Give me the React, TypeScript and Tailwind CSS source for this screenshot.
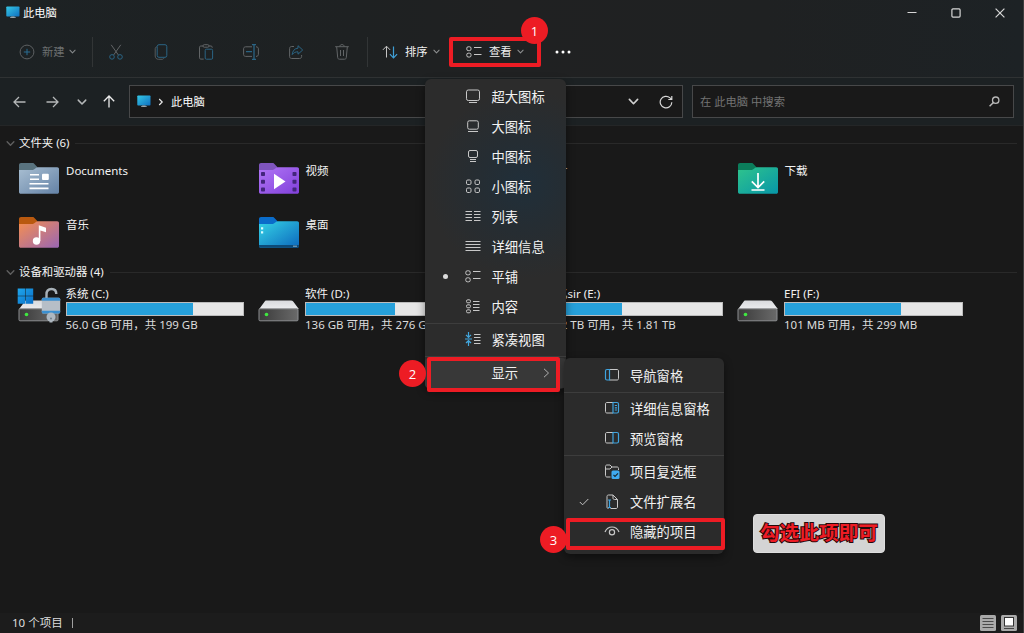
import type { ReactNode } from "react";

const CHROME = "stroke-[#c8c8c8]";

function Icon({ w = 16, h = 16, className = "", children }: { w?: number; h?: number; className?: string; children: ReactNode }) {
  return (
    <svg width={w} height={h} viewBox={`0 0 ${w} ${h}`} fill="none" strokeWidth="1" className={`shrink-0 ${className}`}>
      {children}
    </svg>
  );
}

function Monitor() {
  return (
    <Icon w={14} h={13}>
      <defs>
        <linearGradient id="mon" x1="0" y1="0" x2="1" y2="1">
          <stop offset="0" stopColor="#35c8e6" />
          <stop offset="1" stopColor="#0f6fc0" />
        </linearGradient>
      </defs>
      <rect x="0.3" y="0.5" width="13.2" height="10" rx="0.8" fill="url(#mon)" />
      <path d="M5.2 10.5h3.4v.8h1.2v.8H4v-.8h1.2z" fill="#9aa5ac" />
    </Icon>
  );
}

function Chevron({ className = "stroke-[#a0a0a0]", w = 7 }: { className?: string; w?: number }) {
  return (
    <svg width={w} height={w} viewBox="0 0 8 8" fill="none" strokeWidth="1.2" strokeLinecap="round" strokeLinejoin="round" className={`shrink-0 ${className}`}>
      <path d="M1 2.5 4 5.6 7 2.5" />
    </svg>
  );
}

function TitleBar() {
  return (
    <div className="flex h-[26px] items-center pb-px">
      <div className="flex flex-1 items-center gap-[3px] pl-1.5">
        <Monitor />
        <span className="text-[11.3px] leading-4 text-white">此电脑</span>
      </div>
      <div className="flex w-[133px] items-center stroke-[#d6d6d6]">
        <div className="flex w-[44px] justify-center">
          <Icon w={10} h={10}><path d="M0.5 4.5h9" /></Icon>
        </div>
        <div className="flex w-[44px] justify-center">
          <Icon w={10} h={10}><rect x="0.9" y="0.9" width="8.2" height="8.2" rx="1" strokeWidth="1.2" /></Icon>
        </div>
        <div className="flex w-[44px] justify-center">
          <Icon w={10} h={10}><path d="M.6.6l8.8 8.8M9.4.6.6 9.4" strokeWidth="1.2" /></Icon>
        </div>
      </div>
    </div>
  );
}

const actionIcons: ReactNode[] = [
  <Icon key="cut">
    <path d="M3.2.8 10.4 11M12.8.8 5.6 11" stroke="#626567" />
    <circle cx="4" cy="12.9" r="2.3" stroke="#2a6484" />
    <circle cx="12" cy="12.9" r="2.3" stroke="#2a6484" />
  </Icon>,
  <Icon key="copy">
    <path d="M4 2.8C2.8 3 2.2 3.7 2.2 4.8V12c0 2 1.3 3.3 3.3 3.3H9c1 0 1.7-.5 2-1.5" stroke="#565a5c" />
    <rect x="4.2" y=".7" width="9.6" height="12.6" rx="1.8" stroke="#2a6484" />
  </Icon>,
  <Icon key="paste">
    <path d="M5 2H2.7C2 2 1.5 2.5 1.5 3.2v10.6c0 .7.5 1.3 1.2 1.3h3M11 2h2c.7 0 1.2.5 1.2 1.2v.6" stroke="#626567" />
    <rect x="5" y=".7" width="6" height="2.5" rx="1.2" stroke="#626567" />
    <rect x="7.2" y="5.2" width="7.4" height="10" rx="1.2" stroke="#2a6484" />
  </Icon>,
  <Icon key="rename">
    <path d="M9 2.8H2.6C1.4 2.8.6 3.6.6 4.8v5.6c0 1.2.8 2 2 2H9M13 2.8c1.5 0 2.4.8 2.4 2v5.6c0 1.2-.9 2-2.4 2" stroke="#626567" />
    <path d="M11 .7v14.6M9 .6h4M9 15.4h4M3 7.6h6" stroke="#2a6484" strokeWidth="1.3" />
  </Icon>,
  <Icon key="share">
    <path d="M6 2.5H3.6c-1.2 0-2 .8-2 2v8c0 1.2.8 2 2 2h8c1.2 0 2-.8 2-2v-1.5" stroke="#626567" />
    <path d="M10 1.7 14.7 6 10 10.2V7.8C7.4 7.8 6 8.5 4.2 10.6 4.5 7.2 6.3 4.5 10 4.2z" stroke="#2a6484" strokeLinejoin="round" />
  </Icon>,
  <Icon key="trash">
    <path d="M1.2 2.7h13.6M5.8 2.5C5.8 1.3 6.7.6 8 .6s2.2.7 2.2 1.9M2.7 2.9l1 10.7c.1 1 .7 1.6 1.700 1.6h5.2c1 0 1.6-.6 1.700-1.6l1-10.7M6.500 6v6M9.500 6v6" stroke="#626567" />
  </Icon>,
];

function TilesIcon() {
  return (
    <Icon w={16} h={12} className={CHROME}>
      <rect x=".8" y=".8" width="4.2" height="3.8" rx="1.4" />
      <rect x=".8" y="7.2" width="4.2" height="3.8" rx="1.4" />
      <path d="M8 1.5h7.5M8 8.500h7.5" />
    </Icon>
  );
}

function Toolbar() {
  return (
    <div className="flex h-[51px] items-center text-[11.3px] leading-4">
      <div className="flex w-[92px] items-center pl-[19px]">
        <Icon>
          <circle cx="8" cy="8" r="6.9" stroke="#5d6062" />
          <path d="M8 4.8v6.4M4.8 8h6.4" stroke="#2a6d92" />
        </Icon>
        <span className="ml-[7px] text-[#6c6f70]">新建</span>
        <Chevron className="ml-[4px] stroke-[#85888a]" />
      </div>
      <div className="h-[30px] w-px bg-[#323536]" />
      <div className="flex w-[274px]">
        {actionIcons.map((icon, i) => (
          <div key={i} className="flex w-[45.2px] justify-center">{icon}</div>
        ))}
      </div>
      <div className="h-[30px] w-px bg-[#323536]" />
      <div className="flex w-[82px] items-center pl-[14px]">
        <Icon>
          <path d="M4.5 13.5V2.3M.9 5.9l3.6-3.7 3.6 3.7" stroke="#c4c4c4" />
          <path d="M11.5 2.5v11.2M7.9 10.1l3.6 3.7 3.6-3.7" stroke="#3f9fd6" strokeWidth="1.2" />
        </Icon>
        <span className="ml-[7px] text-[#f0f0f0]">排序</span>
        <Chevron className="ml-[5px] stroke-[#8d8f90]" />
      </div>
      <div className="flex w-[91px] items-center pl-[16px]">
        <TilesIcon />
        <span className="ml-[7px] text-[#f0f0f0]">查看</span>
        <Chevron className="ml-[5px] stroke-[#8d8f90]" />
      </div>
      <Icon w={16} h={4} className="ml-[14px]">
        <circle cx="2" cy="2" r="1.5" fill="#fff" />
        <circle cx="8" cy="2" r="1.5" fill="#fff" />
        <circle cx="14" cy="2" r="1.5" fill="#fff" />
      </Icon>
    </div>
  );
}

function AddressRow() {
  return (
    <div className="flex h-[47px] items-center bg-[#1c2123] pr-[9px] text-[11.3px] leading-4">
      <div className="flex w-[129px] items-center pl-[13px]">
        <Icon w={13} h={12} className="stroke-[#b4b7b8]"><path d="M12.5 6H1M6 1 1 6l5 5" strokeWidth="1.3" /></Icon>
        <Icon w={13} h={12} className="ml-[20px] stroke-[#b4b7b8]"><path d="M.5 6H12M7 1l5 5-5 5" strokeWidth="1.3" /></Icon>
        <Chevron w={10} className="ml-[18px] stroke-[#b4b7b8]" />
        <Icon w={12} h={13} className="ml-[16px] stroke-[#ececec]"><path d="M6 12.5V1M.8 6.2 6 1l5.2 5.2" strokeWidth="1.3" /></Icon>
      </div>
      <div className="flex h-[33px] w-[554px] items-center border border-[#474849] bg-[#191919] pl-[7px]">
        <Monitor />
        <Icon w={6} h={8} className="ml-[7px] stroke-[#e8e8e8]"><path d="M1.2 1 4.2 4 1.2 7" strokeWidth="1.2" /></Icon>
        <span className="ml-[7px] text-white">此电脑</span>
        <div className="flex-1" />
        <Chevron w={11} className="stroke-[#d0d0d0]" />
        <Icon w={14} h={14} className="mr-[9px] ml-[20px] stroke-[#d8d8d8]">
          <path d="M12.8 7.2A5.8 5.8 0 1 1 11 2.9l1.6 1.5M12.8 1v3.5H9.3" strokeWidth="1.2" />
        </Icon>
      </div>
      <div className="ml-[9px] flex h-[33px] flex-1 items-center justify-between border border-[#474849] bg-[#191919] pr-[13px] pl-[7px]">
        <span className="text-[#737373]">在 此电脑 中搜索</span>
        <Icon w={11} h={11} className="stroke-[#b8b8b8]">
          <circle cx="6.7" cy="4.2" r="3.2" strokeWidth="1.3" />
          <path d="M4.4 6.5.6 10.3" strokeWidth="1.5" />
        </Icon>
      </div>
    </div>
  );
}

type FolderKind = "docs" | "video" | "pictures" | "download" | "music" | "desktop";
const folderColors: Record<FolderKind, [string, string, string]> = {
  docs: ["#59737f", "#a9bfd2", "#6482a6"],
  video: ["#7f55bd", "#b176f6", "#8140da"],
  pictures: ["#2277b8", "#48c5f0", "#1676c5"],
  download: ["#0b7d5b", "#2fc48c", "#0796a8"],
  music: ["#b9590f", "#f68f50", "#9966b4"],
  desktop: ["#0a6cca", "#35d3e6", "#0c68bd"],
};

function Folder({ kind }: { kind: FolderKind }) {
  const [tab, from, to] = folderColors[kind];
  return (
    <Icon w={40} h={31}>
      <defs>
        <linearGradient id={`f-${kind}`} x1="0" y1="0" x2="1" y2="1">
          <stop offset="0" stopColor={from} />
          <stop offset="1" stopColor={to} />
        </linearGradient>
      </defs>
      <path d="M0 9V2C0 .8.8 0 2 0h11.5c1 0 1.5.4 2.2 1.2L18.5 4.3V9z" fill={tab} />
      <path d="M0 7h12.5c1.5 0 2.5-.3 3.5-1.2l1.2-1c.5-.4 1-.6 1.8-.6h19.2c1.1 0 1.8.7 1.8 1.8v23c0 1.1-.7 1.8-1.8 1.8H1.8C.7 30.8 0 30.1 0 29z" fill={`url(#f-${kind})`} />
      {kind === "docs" && (
        <>
          <path d="M11 11.7h9M11 16.2h9M10.5 20.7h19M10.5 25.4h19" stroke="#fff" strokeWidth="1.6" />
          <rect x="23" y="10.7" width="6.8" height="6.3" rx="1" fill="#fff" />
        </>
      )}
      {kind === "video" && (
        <>
          <path d="M15 10.8v15.4L26.5 18.5z" fill="#fff" />
          {[9, 16.8, 24.6].map((y) => (
            <g key={y} fill="#43257c">
              <rect x="2" y={y} width="4" height="4" rx=".8" />
              <rect x="33.5" y={y} width="4" height="4" rx=".8" />
            </g>
          ))}
        </>
      )}
      {kind === "download" && <path d="M20 10v14M13.8 18.3 20 24.5l6.2-6.2M13.5 27h13" stroke="#fff" strokeWidth="1.7" />}
      {kind === "music" && (
        <>
          <circle cx="17.5" cy="24" r="3.7" fill="#fff" />
          <path d="M19.8 24V8.3l7.2 2.5v4.5l-5.6-1.8V24z" fill="#fff" />
        </>
      )}
      {kind === "desktop" && (
        <>
          <path d="M0 28h40v1c0 1.1-.7 1.8-1.8 1.8H1.8C.7 30.8 0 30.1 0 29z" fill="#0c4a78" />
          <path d="M2 10.2h2.2v2.2H2zM2 14.2h2.2v2.2H2z" fill="#d8fbff" />
          <path d="M34.5 28.5h1V30h-1zM36.5 28.5h1V30h-1z" fill="#b8d6ea" />
        </>
      )}
      {kind === "pictures" && <path d="M7 26l9-11 6 7 4-4 7 8z" fill="#fff" />}
    </Icon>
  );
}

const folders: { kind: FolderKind; name: string }[] = [
  { kind: "docs", name: "Documents" },
  { kind: "video", name: "视频" },
  { kind: "pictures", name: "图片" },
  { kind: "download", name: "下载" },
  { kind: "music", name: "音乐" },
  { kind: "desktop", name: "桌面" },
];

function DriveIcon({ system }: { system: boolean }) {
  return (
    <Icon w={44} h={38}>
      <defs>
        <linearGradient id="dtop" x1="0" y1="0" x2="0" y2="1"><stop offset="0" stopColor="#d9dadd" /><stop offset="1" stopColor="#ebecee" /></linearGradient>
        <linearGradient id="dbody" x1="0" y1="0" x2="1" y2="0"><stop offset="0" stopColor="#3a3a3a" /><stop offset="1" stopColor="#6a6a6a" /></linearGradient>
        <linearGradient id="win" x1="0" y1="0" x2="1" y2="1"><stop offset="0" stopColor="#1fa6ec" /><stop offset="1" stopColor="#0a70c8" /></linearGradient>
      </defs>
      <path d="M9 13.5h25c1 0 1.7.3 2.2 1L41.800 22H2.2l5.500-7.500c.4-.6.7-1 1.3-1z" fill="url(#dtop)" />
      <rect x="2" y="21.8" width="39" height="12" rx="1" fill="url(#dbody)" stroke="#8d8f92" />
      <circle cx="9.5" cy="27.5" r="1.8" fill="#3fe840" />
      {system && (
        <>
          <path d="M.7 1.5h7.5v7.3H.7zM8.7 1.5h7.5v7.3H8.7zM.7 9.3h7.5v7.5H.7zM8.7 9.3h7.5v7.5H8.7z" fill="url(#win)" />
          <path d="M29.5 12V7.5c0-3.3 1.9-5.5 5-5.5s4.8 2 4.8 5" stroke="#a7b0b7" strokeWidth="2.4" />
          <rect x="24.8" y="10.8" width="18.4" height="15.7" rx="1.5" fill="#b6bec7" />
          <path d="M24.8 13.8v-1.5c0-.8.7-1.5 1.5-1.5h15.4c.8 0 1.5.7 1.5 1.5v1.5zM24.8 23.7h18.4V25c0 .9-.7 1.5-1.5 1.5H26.300c-.8 0-1.500-.6-1.500-1.500z" fill="#3a8fd0" />
          <circle cx="34" cy="30" r="4.5" fill="#aeb8c1" />
          <path d="M32.500 31h3v4.500h-3z" fill="#aeb8c1" />
          <circle cx="34" cy="31.500" r="1" fill="#71808c" />
        </>
      )}
    </Icon>
  );
}

const drives = [
  { name: "系统 (C:)", used: 71.8, info: "56.0 GB 可用，共 199 GB" },
  { name: "软件 (D:)", used: 50.7, info: "136 GB 可用，共 276 GB" },
  { name: "记忆sir (E:)", used: 43.6, info: "1.02 TB 可用，共 1.81 TB" },
  { name: "EFI (F:)", used: 66, info: "101 MB 可用，共 299 MB" },
];

function SectionHeader({ title }: { title: string }) {
  return (
    <div className="flex h-4 items-center pr-[6px] pl-[6px]">
      <Chevron w={9} className="stroke-[#606060]" />
      <span className="ml-[4px] text-[11.4px] leading-4 text-[#f4f4f4]">{title}</span>
      <div className="ml-[6px] h-px flex-1 bg-[#292929]" />
    </div>
  );
}

function Content() {
  return (
    <main className="flex-1 pt-[9px] text-[11.5px] text-[#f2f2f2]">
      <SectionHeader title="文件夹 (6)" />
      <div className="mt-[12px] grid grid-cols-[repeat(4,239.5px)] pl-[19px]">
        {folders.map((f) => (
          <div key={f.kind} className="flex h-[54px] gap-[7px]">
            <Folder kind={f.kind} />
            <span className="leading-4">{f.name}</span>
          </div>
        ))}
      </div>
      <div className="-mt-[7px]">
        <SectionHeader title="设备和驱动器 (4)" />
      </div>
      <div className="mt-[6px] grid grid-cols-[repeat(4,239.5px)] pl-[17px]">
        {drives.map((d, i) => (
          <div key={d.name} className="flex gap-[5px]">
            <div className="pt-px"><DriveIcon system={i === 0} /></div>
            <div className="-ml-[0.5px] flex flex-col">
              <span className="h-[16px] leading-4 whitespace-nowrap">{d.name}</span>
              <div className="h-[14px] w-[178.5px] border border-[#bcbcbc] bg-[#e6e6e6]">
                <div className="h-full bg-[#26a0da]" style={{ width: `${d.used}%` }} />
              </div>
              <span className="mt-px leading-4 whitespace-nowrap text-[#dcdcdc]">{d.info}</span>
            </div>
          </div>
        ))}
      </div>
    </main>
  );
}

function StatusBar() {
  return (
    <footer className="flex h-[20px] items-center bg-[#1c1c1c] pr-[6px] pl-[12px] text-[11.5px] leading-4 text-[#dedede]">
      <span>10 个项目</span>
      <div className="ml-[9px] h-[10px] w-px bg-[#a0a0a0]" />
      <div className="flex-1" />
      <Icon>
        <rect width="16" height="16" rx="1.5" fill="#aaa" />
        <path d="M2.5 3.5h11M2.5 6.5h11M2.5 9.5h11M2.5 12.5h11" stroke="#4a4a4a" />
      </Icon>
      <Icon className="ml-[5px]">
        <rect width="16" height="16" rx="1.5" fill="#aaa" />
        <rect x="3.5" y="2.5" width="9" height="8.5" fill="#fff" stroke="#333" />
        <path d="M3 13.5h10" stroke="#444" />
      </Icon>
    </footer>
  );
}

const lines = (x1: number, x2: number, ys: number[]) => ys.map((y) => `M${x1} ${y}H${x2}`).join("");

const viewItems: { label: string; icon: ReactNode; selected?: boolean }[] = [
  { label: "超大图标", icon: <><rect x="1.5" y="1" width="13" height="10.5" rx="1.8" /><path d="M4 13.5h8" /></> },
  { label: "大图标", icon: <><rect x="2.7" y="1.8" width="10.6" height="8.4" rx="1.6" /><path d="M3 12.5h10" /></> },
  { label: "中图标", icon: <><rect x="3.5" y="1.5" width="9" height="7" rx="1.5" /><path d="M5 10.500h6M5 12.500h6" /></> },
  { label: "小图标", icon: <><rect x="1.5" y="1" width="4.5" height="4.5" rx="1.3" /><rect x="10" y="1" width="4.5" height="4.5" rx="1.3" /><rect x="1.5" y="9" width="4.5" height="4.5" rx="1.3" /><rect x="10" y="9" width="4.5" height="4.5" rx="1.3" /></> },
  { label: "列表", icon: <path d={lines(0.5, 7, [2.5, 5.5, 8.5, 11.5]) + lines(9, 15.5, [2.5, 5.5, 8.5, 11.5])} /> },
  { label: "详细信息", icon: <path d={lines(0.5, 15.5, [2.5, 5.5, 8.5, 11.5])} /> },
  { label: "平铺", selected: true, icon: <><rect x=".8" y="1.8" width="4.4" height="4" rx="1.5" /><rect x=".8" y="8.8" width="4.4" height="4" rx="1.5" /><path d="M8 2.5h7.5M8 9.5h7.5" /></> },
  { label: "内容", icon: <><rect x="1.5" y=".8" width="4" height="3" rx="1.3" /><rect x="1.5" y="5.8" width="4" height="3" rx="1.3" /><rect x="1.5" y="10.8" width="4" height="3" rx="1.3" /><path d="M8 2.5h6.5M8 5.5h6.5M8 8.5h6.5M8 11.5h6.5" /></> },
];

function MenuRow({ icon, label, mark, trailing }: { icon?: ReactNode; label: string; mark?: ReactNode; trailing?: ReactNode }) {
  return (
    <div className="flex h-[30px] items-center">
      <div className="flex w-[40px] justify-center">{mark}</div>
      <Icon className={CHROME}>{icon}</Icon>
      <span className="ml-[10.5px] text-[13.3px] leading-5 whitespace-nowrap text-[#f2f2f2]">{label}</span>
      {trailing}
    </div>
  );
}

function Separator() {
  return <div className="my-px h-px bg-[#3d3d3d]" />;
}

function ViewMenu() {
  return (
    <div className="absolute top-[79px] left-[425px] w-[141px] rounded-[6px] bg-[#2c2c2c] bg-[radial-gradient(circle_at_98px_105px,#202f3a_0px,#252d33_42px,#2c2c2c_95px)] pt-[3px] pb-px shadow-[0_3px_8px_rgba(0,0,0,0.45)]">
      {viewItems.map((it) => (
        <MenuRow key={it.label} icon={it.icon} label={it.label} mark={it.selected && <div className="-mt-px h-[5px] w-[5px] rounded-full bg-[#dcdcdc]" />} />
      ))}
      <Separator />
      <MenuRow
        label="紧凑视图"
        icon={
          <>
            <path d="M3.5 0v5M1 2.900l2.500 2.500L6 2.900M3.500 14v-5M1 11l2.500-2.500L6 11M0 7h7" stroke="#42a8e0" strokeWidth="1.2" />
            <path d="M9 2.500h6.500M9 5.500h6.500M9 8.500h6.500M9 11.500h6.500" />
          </>
        }
      />
      <Separator />
      <div className="rounded-[4px] bg-[#383838]">
        <MenuRow
          label="显示"
          trailing={<Icon w={7} h={10} className="ml-[25px] stroke-[#b0b0b0]"><path d="M1 .8 5.5 5 1 9.2" /></Icon>}
        />
      </div>
    </div>
  );
}

function ShowMenu() {
  return (
    <div className="absolute top-[358px] left-[563.5px] w-[160px] rounded-[6px] bg-[#2b2b2b] pt-[3px] pb-[7px] shadow-[0_3px_8px_rgba(0,0,0,0.45)]">
      <MenuRow label="导航窗格" icon={<><path d="M5.5 1.500H13c1 0 1.500.5 1.500 1.500v7.500c0 1-.5 1.500-1.500 1.500H5.500" /><path d="M5.500 1.500H3C2 1.500 1.500 2 1.500 3v7.500c0 1 .5 1.500 1.500 1.500h2.500z" stroke="#3fa4df" strokeWidth="1.200" /></>} />
      <Separator />
      <MenuRow label="详细信息窗格" icon={<><path d="M9 1.500H3C2 1.500 1.500 2 1.500 3v7.500c0 1 .5 1.500 1.500 1.500h6" /><path d="M9 1.500h4c1 0 1.500.5 1.500 1.500v7.500c0 1-.5 1.500-1.500 1.500H9zM10.800 4.500H13M10.800 6.800H13M10.800 9H13" stroke="#3fa4df" strokeWidth="1.200" /></>} />
      <MenuRow label="预览窗格" icon={<><path d="M9 1.500H3C2 1.500 1.500 2 1.500 3v7.500c0 1 .5 1.500 1.500 1.500h6" /><path d="M9 1.500h4c1 0 1.500.5 1.500 1.500v7.500c0 1-.5 1.500-1.500 1.500H9z" stroke="#3fa4df" strokeWidth="1.200" /></>} />
      <Separator />
      <MenuRow
        label="项目复选框"
        icon={
          <>
            <path d="M6.500 13H3c-1 0-1.500-.6-1.500-1.500v-9C1.500 1.600 2 1 3 1h3l2 2h5c1 0 1.500.5 1.500 1.500V6M1.500 5H6l2-2" />
            <rect x="7.500" y="6.500" width="8" height="8.500" rx="1.500" fill="#3faaf0" stroke="none" />
            <path d="m9.500 10.800 1.500 1.500 3-3" stroke="#182830" strokeWidth="1.200" />
          </>
        }
      />
      <MenuRow
        label="文件扩展名"
        mark={<Icon w={10} h={8} className="stroke-[#c4c4c4]"><path d="M.8 4 3.600 6.800 9.300 1" /></Icon>}
        icon={
          <>
            <path d="M6.500 14.500H12c.9 0 1.500-.5 1.500-1.500V5.500L9 1H4.500C3.500 1 3 1.600 3 2.500V5M9 1v3c0 1 .5 1.500 1.500 1.500h3M3 5v8c0 1 .5 1.500 1.500 1.500" />
            <path d="M5.500 6v7.500M4 6h3M4 13.500h3" stroke="#3fa4df" strokeWidth="1.200" />
          </>
        }
      />
      <MenuRow label="隐藏的项目" icon={<><path d="M1 8C2.500 4.500 5 3 8 3S13.500 4.500 15 8" strokeWidth="1.200" /><circle cx="8" cy="8.200" r="2.600" strokeWidth="1.200" /></>} />
    </div>
  );
}

function Badge({ n, className }: { n: number; className: string }) {
  return (
    <div className={`absolute flex h-[27px] w-[27px] items-center justify-center rounded-full bg-[#ed1c24] font-['Open_Sans','Noto_Sans',sans-serif] text-[13px] leading-4 text-white ${className}`}>
      {n}
    </div>
  );
}

export default function App() {
  return (
    <div className="relative flex h-[633px] w-[1024px] flex-col overflow-hidden border-r border-[#3c3d3d] bg-[#191919] font-['Noto_Sans','Noto_Sans_CJK_SC',sans-serif]">
      <header className="bg-[linear-gradient(90deg,#1d2224_0%,#1e2122_35%,#202122_50%,#1f2122_75%,#1d2225_100%)]">
        <TitleBar />
        <Toolbar />
        <div className="h-px bg-[#2f3233]" />
        <AddressRow />
        <div className="h-px bg-[#242627]" />
      </header>
      <Content />
      <StatusBar />
      <ViewMenu />
      <ShowMenu />
      <div className="absolute top-[37px] left-[449px] h-[30px] w-[92px] rounded-[2px] border-4 border-[#ed1c24]" />
      <div className="absolute top-[357px] left-[427px] h-[35px] w-[133px] rounded-[2px] border-4 border-[#ed1c24]" />
      <div className="absolute top-[518px] left-[566px] h-[32px] w-[159px] rounded-[2px] border-4 border-[#ed1c24]" />
      <Badge n={1} className="top-[17px] left-[521px]" />
      <Badge n={2} className="top-[360px] left-[399px]" />
      <Badge n={3} className="top-[526px] left-[540px]" />
      <div className="absolute top-[514px] left-[753px] flex h-[39px] w-[132px] items-center justify-center rounded-[4px] border border-[#dedede] bg-[#d4d4d4] pb-px text-[19.7px] leading-6 font-bold text-[#ed1c24] [paint-order:stroke_fill] [-webkit-text-stroke:2px_#26090b]">
        勾选此项即可
      </div>
    </div>
  );
}
